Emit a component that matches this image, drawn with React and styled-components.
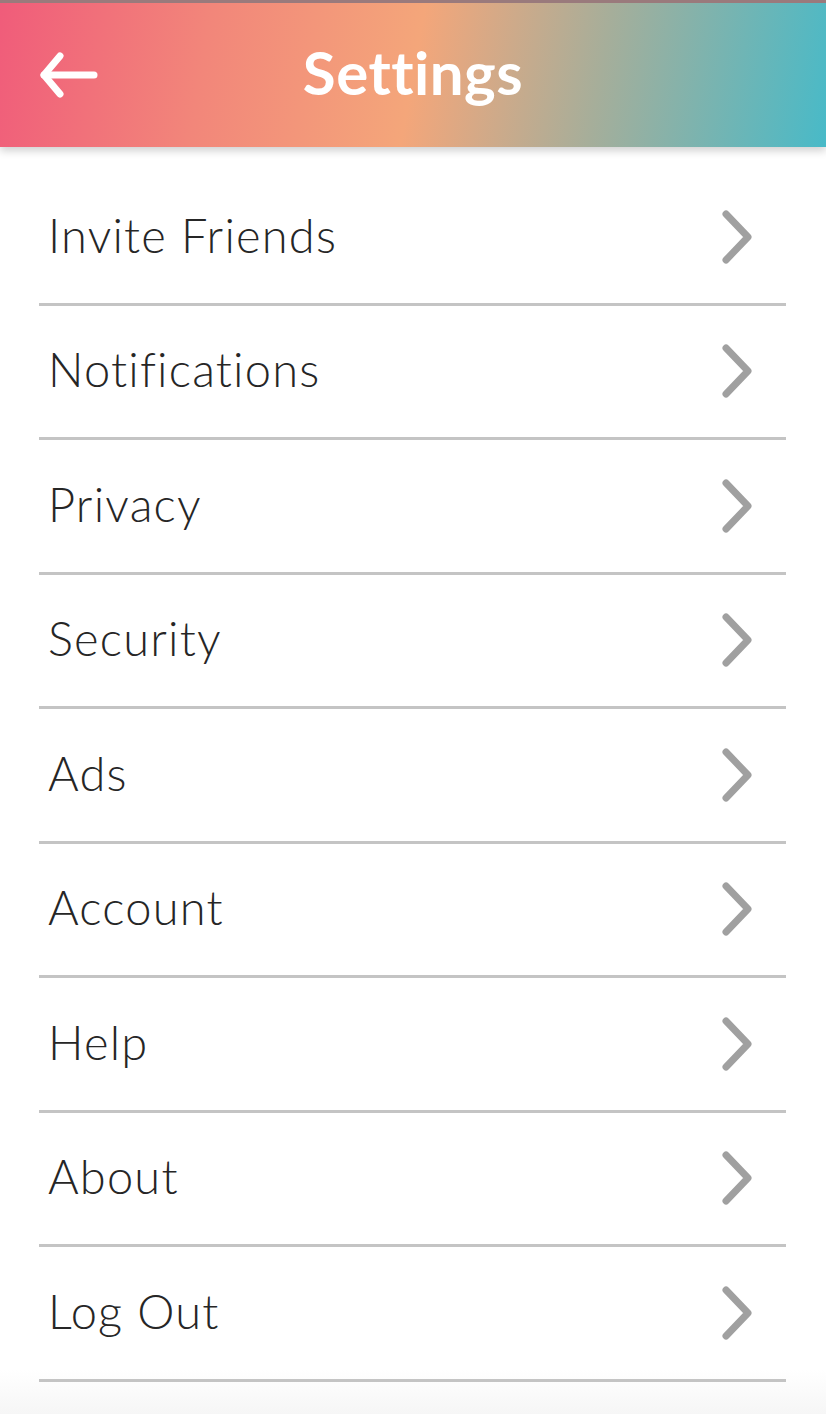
import React from 'react'
import styled, { createGlobalStyle } from 'styled-components'

const GlobalStyle = createGlobalStyle`
  html, body { margin: 0; padding: 0; background: #fff; }
  body { font-family: Lato, "Liberation Sans", sans-serif; }
`

const items = ['Invite Friends', 'Notifications', 'Privacy', 'Security', 'Ads', 'Account', 'Help', 'About', 'Log Out']

const BackArrow = () => (
  <svg width="62" height="48" viewBox="0 0 62 48" fill="none" stroke="#fff" strokeWidth="7" strokeLinecap="round" strokeLinejoin="round">
    <path d="M56 24H6" />
    <path d="M22 5L6 24l16 19" />
  </svg>
)

const Chevron = () => (
  <svg width="36" height="56" viewBox="0 0 36 56" fill="none" stroke="#a0a0a0" strokeWidth="7" strokeLinecap="round" strokeLinejoin="round">
    <path d="M6 5l22 23L6 51" />
  </svg>
)

const App = () => {
  return (
    <Page>
      <GlobalStyle />
      <Header>
        <BackButton><BackArrow /></BackButton>
        <Title>Settings</Title>
      </Header>
      <List>
        {items.map(item => (
          <Row key={item}>
            <Label>{item}</Label>
            <Chevron />
          </Row>
        ))}
      </List>
    </Page>
  )
}

export default App

const Page = styled.div`
  min-height: 1414px;
  background: linear-gradient(to bottom, #fff 0, #fff 1370px, #f6f6f6 1414px);
`

const Header = styled.header`
  position: relative;
  height: 144px;
  border-top: 3px solid #9a7a7c;
  display: flex;
  align-items: center;
  justify-content: center;
  background: linear-gradient(100deg, #f05c7a 0%, #f2867a 25%, #f4a67a 50%, #a6ae9a 72%, #48bac8 100%);
  box-shadow: 0 4px 8px rgba(0, 0, 0, 0.18);
`

const BackButton = styled.div`
  position: absolute;
  left: 38px;
  top: 48px;
  display: flex;
`

const Title = styled.h1`
  margin: 0;
  color: #fff;
  font-size: 60px;
  font-weight: 700;
  letter-spacing: 0.5px;
  transform: translateY(-3px);
`

const List = styled.div`
  display: flex;
  flex-direction: column;
  margin: 24px 40px 0 39px;
`

const Row = styled.div`
  display: flex;
  align-items: center;
  justify-content: space-between;
  height: 131.5px;
  border-bottom: 3px solid #c4c4c4;
  padding: 0 30px 0 9px;
`

const Label = styled.span`
  font-size: 47px;
  color: #262626;
  font-weight: 300;
  letter-spacing: 1.2px;
  transform: translateY(-2px);
`
